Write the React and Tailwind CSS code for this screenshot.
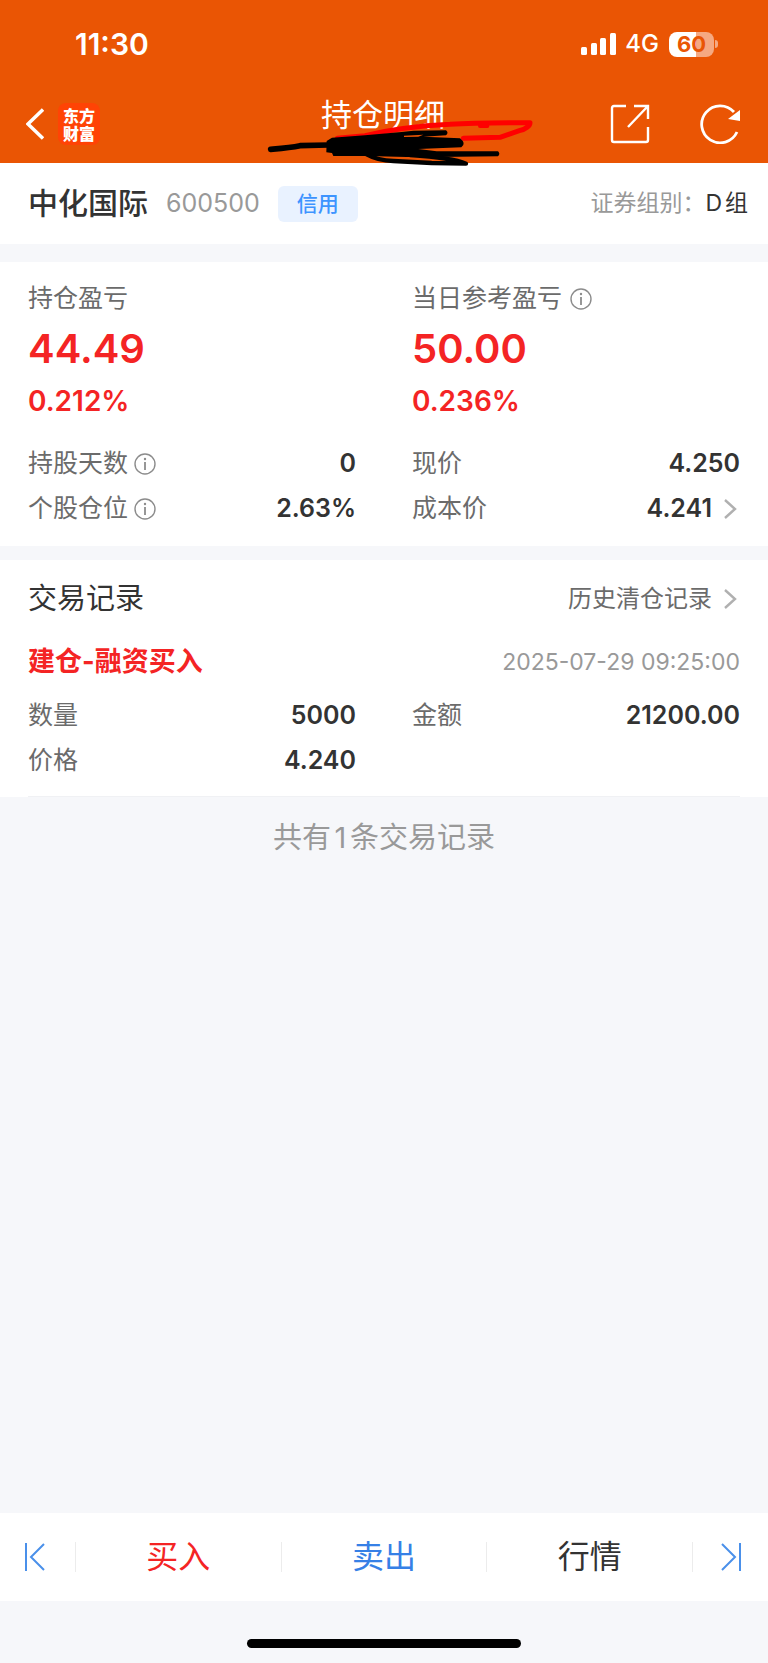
import React from 'react';

const records = [
  {
    id: 1,
    title: '建仓-融资买入',
    time: '2025-07-29 09:25:00',
    fields: [
      { label: '数量', value: '5000' },
      { label: '金额', value: '21200.00' },
      { label: '价格', value: '4.240' },
    ],
  },
];

function InfoIcon() {
  return (
    <svg className="w-[22px] h-[22px] shrink-0" viewBox="0 0 22 22" fill="none" stroke="#8c8c8c">
      <circle cx="11" cy="11" r="10" strokeWidth="1.4" />
      <path d="M11 9v8" strokeWidth="1.8" />
      <circle cx="11" cy="6" r="1.2" fill="#8c8c8c" stroke="none" />
    </svg>
  );
}

function ChevronIcon() {
  return (
    <svg className="w-4 h-5 shrink-0" viewBox="0 0 16 20" fill="none" stroke="#b0b0b0" strokeWidth="2.4">
      <path d="M1 1l10 9-10 9" />
    </svg>
  );
}

function StatusBar() {
  return (
    <div className="h-[88px] pl-[75px] pr-[50px] flex items-center justify-between">
      <span className="text-[30px] font-semibold">11:30</span>
      <div className="flex items-center">
        <svg className="w-9 h-[22px]" viewBox="0 0 36 22" fill="#fff">
          <rect x="0" y="14" width="6" height="8" rx="1.5" />
          <rect x="10" y="10" width="6" height="12" rx="1.5" />
          <rect x="19" y="5" width="6" height="17" rx="1.5" />
          <rect x="29" y="0" width="6" height="22" rx="1.5" />
        </svg>
        <span className="ml-2 text-2xl font-medium">4G</span>
        <div className="ml-2.5 flex items-center">
          <div className="w-[45px] h-[25px] rounded-lg bg-linear-to-r from-white from-60% to-[#f5a982] to-60% flex items-center justify-center text-[22px] leading-none font-bold text-[#ea5504]">
            60
          </div>
          <div className="ml-px w-[3px] h-2 rounded-r-full bg-[#f5a982]" />
        </div>
      </div>
    </div>
  );
}

function Scribble() {
  return (
    <svg
      className="absolute left-1/2 -translate-x-1/2 top-[85px] w-[300px] h-[90px] pointer-events-none"
      viewBox="-48 0 900 270"
      fill="none"
      strokeLinecap="round"
      strokeLinejoin="round"
    >
      <path
        d="M262 160L345 152C420 134 520 122 600 118C680 112 760 113 840 113C840 122 828 132 808 137L750 157L640 160"
        stroke="#ff0000"
        strokeWidth="15"
      />
      <path d="M690 123H712" stroke="#ff0000" strokeWidth="12" />
      <path d="M62 193C95 190 120 188 150 182L235 180" stroke="#000" strokeWidth="17" />
      <path
        d="M230 168L246 158L345 151L455 141L490 137L588 136Q597 143 588 151L520 155L630 160Q650 176 634 187L505 192L560 199H744Q752 206 744 214L560 216L470 216L350 213L250 213L246 204L229 202Z"
        fill="#000"
      />
      <path d="M462 152L520 149L505 155L462 156Z" fill="#ea5504" />
      <path d="M350 208C375 222 400 227 430 228L545 234L648 236C620 224 570 216 480 210" stroke="#000" strokeWidth="13" />
    </svg>
  );
}

function Header() {
  return (
    <header className="relative z-10 bg-[#ea5504] text-white pb-[3px]">
      <StatusBar />
      <div className="h-[72px] pl-[26px] pr-7 grid grid-cols-[1fr_auto_1fr] items-center">
        <div className="flex items-center gap-3.5">
          <button type="button" aria-label="返回">
            <svg className="w-[18px] h-8" viewBox="0 0 18 32" fill="none" stroke="#fff" strokeWidth="3.4">
              <path d="M17 1.500L2 16l15 14.500" />
            </svg>
          </button>
          <div className="w-[42px] h-[42px] px-[5px] py-[3px] rounded-lg bg-[#ff4305] text-base leading-[18px] font-black font-['Noto_Sans_CJK_SC',sans-serif]">
            东方财富
          </div>
        </div>
        <h1 className="pb-[18px] text-[31px] leading-9">持仓明细</h1>
        <div className="flex items-center justify-end gap-[50px]">
          <button type="button" aria-label="分享">
            <svg className="w-10 h-10" viewBox="0 0 40 40" fill="none" stroke="#fff" strokeWidth="2.4">
              <path d="M16 2H4Q2 2 2 4V36Q2 38 4 38H36Q38 38 38 36V23" />
              <path d="M24 2H38V15M38 2L18 23" />
            </svg>
          </button>
          <button type="button" aria-label="刷新">
            <svg className="w-10 h-10" viewBox="0 0 40 40" fill="none" stroke="#fff" strokeWidth="2.800">
              <path d="M37 28A18.500 18.500 0 1 1 34 8" />
              <path d="M40 6V17L28 15Z" fill="#fff" stroke="none" />
            </svg>
          </button>
        </div>
      </div>
      <Scribble />
    </header>
  );
}

function Field({ label, value, info, link }) {
  return (
    <div className="h-[45px] flex items-center justify-between">
      <dt className="flex items-center gap-1.5 text-[25px] text-[#6b6b6b]">
        {label}
        {info && <InfoIcon />}
      </dt>
      <dd className="flex items-center gap-3 text-[25px] font-semibold text-[#333]">
        {value}
        {link && <ChevronIcon />}
      </dd>
    </div>
  );
}

function Profit({ label, amount, percent, info }) {
  return (
    <div>
      <div className="h-10 flex items-center gap-2 text-[25px] text-[#6b6b6b]">
        {label}
        {info && <InfoIcon />}
      </div>
      <div className="h-[60px] flex items-center text-[40px] font-semibold">{amount}</div>
      <div className="h-11 flex items-center text-[28px] font-semibold">{percent}</div>
    </div>
  );
}

export default function App() {
  return (
    <div className="min-h-screen flex flex-col bg-[#f6f7fa] font-['Inter','Noto_Sans_CJK_SC',sans-serif] [text-autospace:normal] text-[#333]">
      <Header />

      <main className="grow">
        <section className="h-[81px] pl-7 pr-5 bg-white flex items-center">
          <h2 className="text-[30px] font-medium">中化国际</h2>
          <span className="ml-[18px] text-[25px] text-[#999]">600500</span>
          <span className="ml-[18px] w-20 h-9 rounded-md bg-[#e9f2ff] flex items-center justify-center text-[21px] font-medium text-[#3d94ff]">
            信用
          </span>
          <p className="ml-auto text-[23px] text-[#999]">
            证券组别：<span className="text-[#333]">D组</span>
          </p>
        </section>

        <section className="mt-[18px] px-7 pt-[17px] pb-[15px] bg-white">
          <div className="grid grid-cols-2 gap-x-14 text-[#f42424] mb-[18px]">
            <Profit label="持仓盈亏" amount="44.49" percent="0.212%" />
            <Profit label="当日参考盈亏" amount="50.00" percent="0.236%" info />
          </div>
          <dl className="grid grid-cols-2 gap-x-14">
            <Field label="持股天数" value="0" info />
            <Field label="现价" value="4.250" />
            <Field label="个股仓位" value="2.63%" info />
            <Field label="成本价" value="4.241" link />
          </dl>
        </section>

        <section className="mt-3.5 px-7 pt-px bg-white">
          <div className="h-[76px] flex items-center justify-between">
            <h2 className="text-[29px]">交易记录</h2>
            <button type="button" className="flex items-center gap-3 text-[24px] text-[#6b6b6b]">
              历史清仓记录
              <ChevronIcon />
            </button>
          </div>
          {records.map((record) => (
            <article key={record.id} className="pb-[13px] border-b border-[#f0f1f4]">
              <div className="h-[50px] mb-1.5 flex items-center justify-between">
                <h3 className="text-[27px] font-bold text-[#f42424]">{record.title}</h3>
                <time className="text-[23px] text-[#999]">{record.time}</time>
              </div>
              <dl className="grid grid-cols-2 gap-x-14">
                {record.fields.map((field) => (
                  <Field key={field.label} label={field.label} value={field.value} />
                ))}
              </dl>
            </article>
          ))}
        </section>

        <p className="h-[82px] flex items-center justify-center text-[29px] text-[#999]">
          {`共有${records.length}条交易记录`}
        </p>
      </main>

      <footer>
        <nav className="h-[88px] bg-white flex items-center text-[32px]">
          <button type="button" aria-label="上一只" className="w-[75px] pl-[25px]">
            <svg className="w-5 h-7" viewBox="0 0 20 28" fill="none" stroke="#4a90ea" strokeWidth="2">
              <path d="M1 0V28M19 1L6 14L19 27" />
            </svg>
          </button>
          <button type="button" className="flex-1 h-[30px] leading-[30px] border-l border-[#ececec] text-[#f42424]">
            买入
          </button>
          <button type="button" className="flex-1 h-[30px] leading-[30px] border-l border-[#ececec] text-[#3680e6]">
            卖出
          </button>
          <button type="button" className="flex-1 h-[30px] leading-[30px] border-x border-[#ececec]">
            行情
          </button>
          <button type="button" aria-label="下一只" className="w-[75px] pl-7">
            <svg className="w-5 h-7" viewBox="0 0 20 28" fill="none" stroke="#4a90ea" strokeWidth="2">
              <path d="M19 0V28M1 1L14 14L1 27" />
            </svg>
          </button>
        </nav>
        <div className="h-[62px] pt-[38px]">
          <div className="mx-auto w-[274px] h-[9px] rounded-full bg-black" />
        </div>
      </footer>
    </div>
  );
}
